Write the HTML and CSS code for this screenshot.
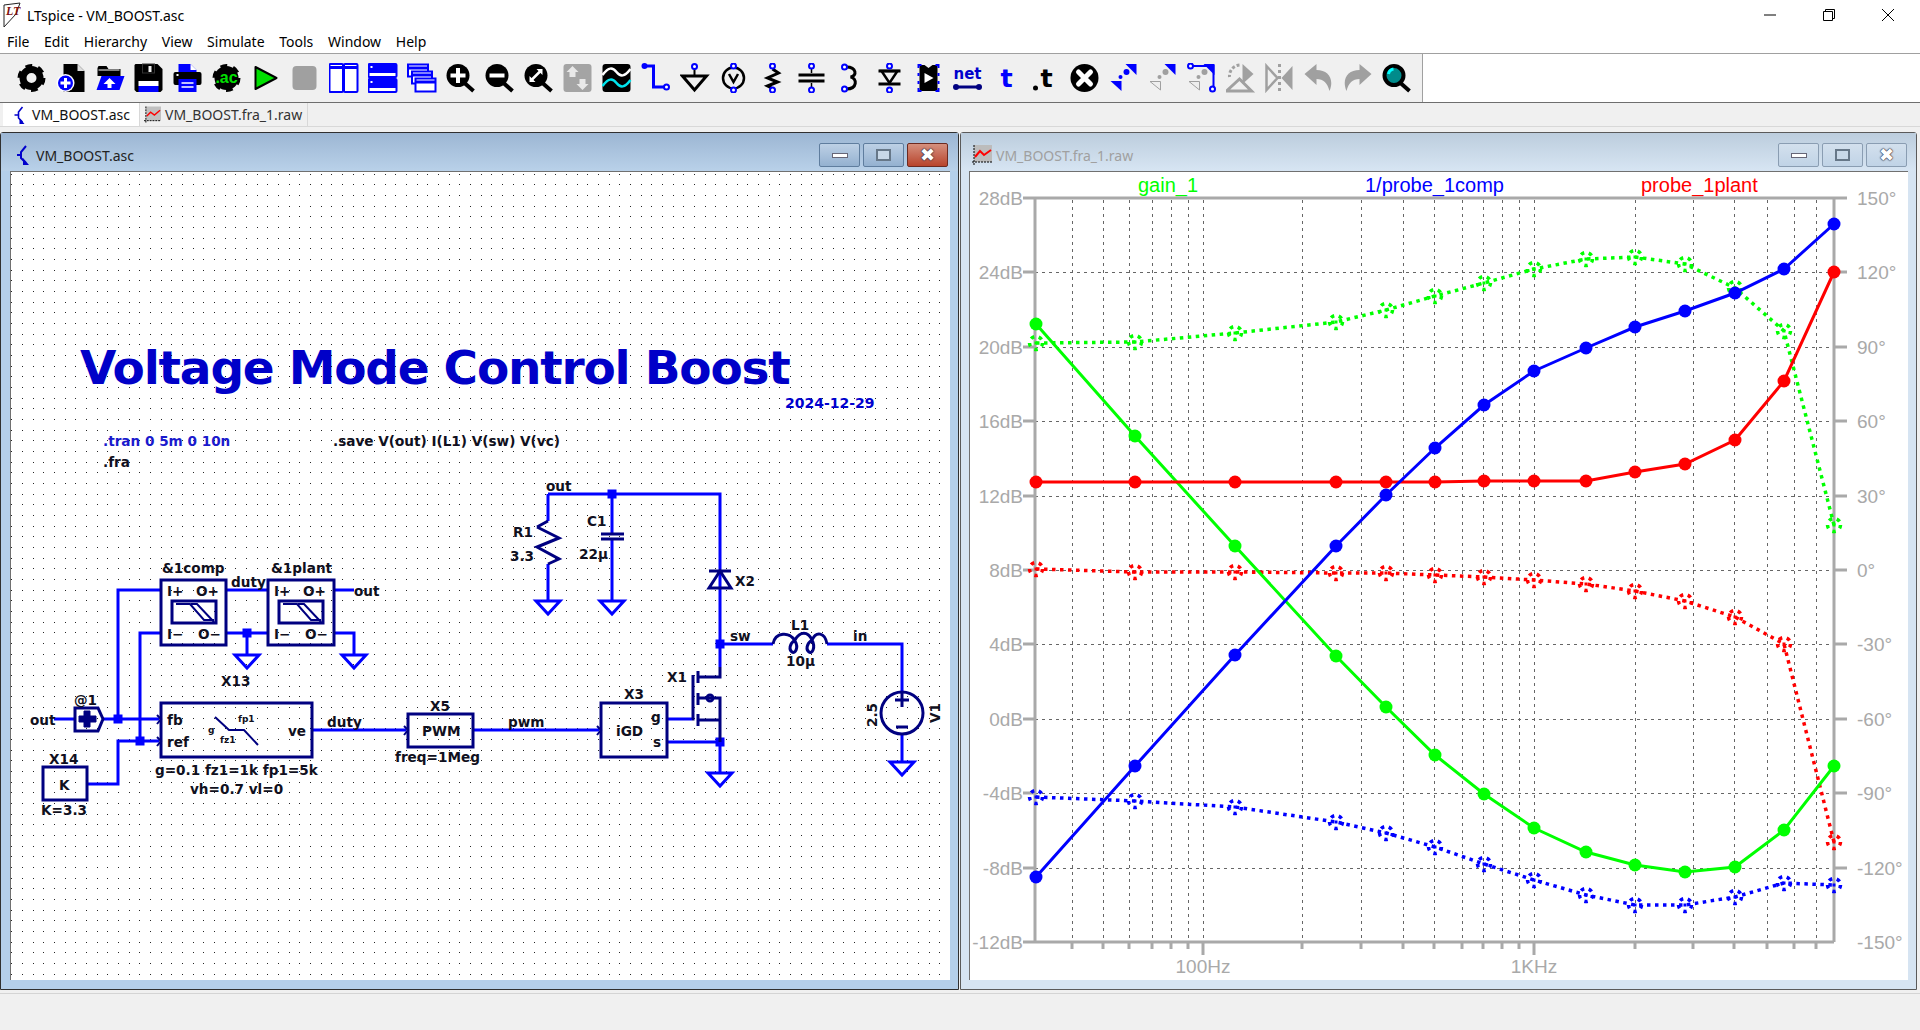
FILE: index.html
```html
<!DOCTYPE html>
<html lang="en">

<head>
    <meta charset="UTF-8">
    <title>LTspice - VM_BOOST.asc</title>
    <link rel="stylesheet" href="styles.css">
</head>

<body>
    <header class="titlebar">
        <svg class="applogo" viewBox="0 0 18 26">
            <path d="M1 3 L17 1 L13 12 L1 25 Z" fill="#fff" stroke="#222" stroke-width="1" />
            <text x="3" y="13" class="applogo-text">LT</text>
        </svg>
        <span class="apptitle">LTspice - VM_BOOST.asc</span>
        <div class="wincontrols">
            <svg viewBox="0 0 14 14">
                <path d="M1 7H13" />
            </svg>
            <svg viewBox="0 0 14 14">
                <path d="M1.5 3.5H10.5V12.5H1.5ZM3.5 3.5V1.5H12.5V10.5H10.5" />
            </svg>
            <svg viewBox="0 0 14 14">
                <path d="M1 1L13 13M13 1L1 13" />
            </svg>
        </div>
    </header>

    <nav class="menubar">
        <span>File</span>
        <span>Edit</span>
        <span>Hierarchy</span>
        <span>View</span>
        <span>Simulate</span>
        <span>Tools</span>
        <span>Window</span>
        <span>Help</span>
    </nav>

    <div class="toolbar">
        <div class="tools">
            <!-- settings -->
            <svg viewBox="0 0 30 30"><circle cx="15" cy="15" r="12" fill="none" stroke="#000" stroke-width="4" stroke-dasharray="6.6 5.97" /><circle cx="15" cy="15" r="8.5" fill="none" stroke="#000" stroke-width="7" /></svg>
            <!-- new -->
            <svg viewBox="0 0 30 30"><path d="M8 1H22L29 8V29H8Z" fill="#000" /><path d="M22 1L29 8H22Z" fill="#ddd" /><circle cx="10" cy="20" r="9" fill="#fff" /><circle cx="10" cy="20" r="7.5" fill="#0000ff" /><path d="M10 15V25M5 20H15" stroke="#fff" stroke-width="3" /></svg>
            <!-- open -->
            <svg viewBox="0 0 30 30"><path d="M3 5L4 3H12L14 6H26V13H3Z" fill="#000" /><path d="M4 7H25" stroke="#fff" /><path d="M7 13H30L25 27H2Z" fill="#0000ff" /><path d="M15 15L21 21H17V25H13V21H9Z" fill="#fff" /></svg>
            <!-- save -->
            <svg viewBox="0 0 30 30"><path d="M2 1H24L29 6V27L27 29H3L1 27V2Z" fill="#000" /><rect x="9" y="1" width="12" height="9" fill="#000" stroke="#333" /><rect x="15" y="3" width="3" height="6" fill="#eee" /><rect x="5" y="18" width="20" height="5" fill="#fff" /><rect x="5" y="23" width="20" height="6" fill="#0000ff" /></svg>
            <!-- print -->
            <svg viewBox="0 0 30 30"><path d="M6 1H18L24 7V11H6Z" fill="#0000ff" /><path d="M18 1L24 7H18Z" fill="#fff" /><rect x="1" y="9" width="28" height="13" rx="2" fill="#000" /><rect x="4" y="11" width="2" height="2" fill="#fff" /><rect x="6" y="16" width="18" height="13" fill="#0000ff" /><path d="M9 20H21M9 24H21" stroke="#fff" stroke-width="1.5" /></svg>
            <!-- ac -->
            <svg viewBox="0 0 30 30"><circle cx="15" cy="15" r="12" fill="none" stroke="#000" stroke-width="4" stroke-dasharray="6.6 5.97" /><circle cx="15" cy="15" r="12" fill="#000" /><text x="15" y="20" class="ico-ac">.ac</text></svg>
            <!-- run -->
            <svg viewBox="0 0 30 30"><path d="M5 4L26 15L5 26Z" fill="#00e000" stroke="#000" stroke-width="2" stroke-linejoin="round" /></svg>
            <!-- halt -->
            <svg viewBox="0 0 30 30"><rect x="3" y="3" width="24" height="24" rx="4" fill="#a0a0a0" /></svg>
            <!-- tile vertical -->
            <svg viewBox="0 0 30 30"><rect x="1" y="1" width="13.5" height="28" rx="1" fill="#fff" stroke="#0000ff" stroke-width="2" /><rect x="15.5" y="1" width="13.5" height="28" rx="1" fill="#fff" stroke="#0000ff" stroke-width="2" /><path d="M1 4.5H14M16 4.5H29" stroke="#0000ff" stroke-width="3" /></svg>
            <!-- tile horizontal -->
            <svg viewBox="0 0 30 30"><rect x="1" y="1" width="28" height="13" rx="1" fill="#fff" stroke="#0000ff" stroke-width="2" /><rect x="1" y="16" width="28" height="13" rx="1" fill="#fff" stroke="#0000ff" stroke-width="2" /><path d="M1 6H29M1 21H29" stroke="#0000ff" stroke-width="8" /><path d="M3 4H5M3 19H5" stroke="#fff" stroke-width="2" /></svg>
            <!-- cascade -->
            <svg viewBox="0 0 30 30"><rect x="1.5" y="1.5" width="20" height="12" fill="#fff" stroke="#0000ff" stroke-width="2" /><rect x="5.5" y="8.5" width="20" height="12" fill="#fff" stroke="#0000ff" stroke-width="2" /><rect x="9" y="15.5" width="20" height="13" fill="#fff" stroke="#0000ff" stroke-width="2" /><path d="M1 5H22M5 12H26M9 19H29" stroke="#0000ff" stroke-width="3" /></svg>
            <!-- zoom in -->
            <svg viewBox="0 0 30 30"><path d="M19 20L28 28" stroke="#000" stroke-width="4" /><circle cx="12.5" cy="12.5" r="11.5" fill="#000" /><path d="M12.5 5V20M5 12.5H20" stroke="#fff" stroke-width="4" /></svg>
            <!-- zoom out -->
            <svg viewBox="0 0 30 30"><path d="M19 20L28 28" stroke="#000" stroke-width="4" /><circle cx="12.5" cy="12.5" r="11.5" fill="#000" /><path d="M5 12.5H20" stroke="#fff" stroke-width="4" /></svg>
            <!-- zoom fit -->
            <svg viewBox="0 0 30 30"><path d="M19 20L28 28" stroke="#000" stroke-width="4" /><circle cx="12.5" cy="12.5" r="11.5" fill="#000" /><path d="M7.5 17.5L17.5 7.5" stroke="#fff" stroke-width="2.5" /><path d="M13 6H19V12ZM6 13V19H12Z" fill="#fff" /></svg>
            <!-- pan -->
            <svg viewBox="0 0 30 30"><rect x="1" y="1" width="28" height="28" rx="3" fill="#a4a4a4" /><path d="M10 3L16 9H13V14H7V9H4Z" fill="#e8e8e8" /><path d="M20 27L14 21H17V16H23V21H26Z" fill="#e8e8e8" /></svg>
            <!-- waves -->
            <svg viewBox="0 0 30 30"><rect x="1" y="1" width="28" height="28" rx="3" fill="#000" /><path d="M1 12C7 4 11 4 15 9S23 14 29 6" fill="none" stroke="#fff" stroke-width="2.5" /><path d="M1 23C7 15 11 15 15 20S23 25 29 17" fill="none" stroke="#00e5ee" stroke-width="2.5" /></svg>
            <!-- wire -->
            <svg viewBox="0 0 30 30"><path d="M4 3H13V24H26" fill="none" stroke="#0000ff" stroke-width="3" /><circle cx="4" cy="3" r="3" fill="#0000ff" /><circle cx="26" cy="24" r="2.5" fill="#fff" stroke="#0000ff" stroke-width="2" /></svg>
            <!-- ground -->
            <svg viewBox="0 0 30 30"><path d="M15 6V13" stroke="#000" stroke-width="2" /><path d="M3 13H27L15 27Z" fill="none" stroke="#000" stroke-width="3" /><circle cx="15" cy="3.5" r="2.5" fill="#fff" stroke="#0000ff" stroke-width="2" /></svg>
            <!-- voltage source -->
            <svg viewBox="0 0 30 30"><circle cx="15" cy="15" r="10.5" fill="none" stroke="#000" stroke-width="2.5" /><path d="M10.5 11L15 19L19.5 11" fill="none" stroke="#000" stroke-width="2.5" /><circle cx="15" cy="3" r="2.5" fill="#fff" stroke="#0000ff" stroke-width="2" /><circle cx="15" cy="27" r="2.5" fill="#fff" stroke="#0000ff" stroke-width="2" /></svg>
            <!-- resistor -->
            <svg viewBox="0 0 30 30"><path d="M15 6L21 10L10 15L20 19L10 23L14 25" fill="none" stroke="#000" stroke-width="3" /><circle cx="15" cy="3" r="2.5" fill="#fff" stroke="#0000ff" stroke-width="2" /><circle cx="15" cy="27" r="2.5" fill="#fff" stroke="#0000ff" stroke-width="2" /></svg>
            <!-- capacitor -->
            <svg viewBox="0 0 30 30"><path d="M2 12H28M2 18H28" stroke="#000" stroke-width="3" /><path d="M15 5V10M15 20V25" stroke="#000" stroke-width="1.5" /><circle cx="15" cy="3" r="2.5" fill="#fff" stroke="#0000ff" stroke-width="2" /><circle cx="15" cy="27" r="2.5" fill="#fff" stroke="#0000ff" stroke-width="2" /></svg>
            <!-- inductor -->
            <svg viewBox="0 0 30 30"><path d="M11 4C21 4 22 13 15 14C22 15 22 26 11 26" fill="none" stroke="#000" stroke-width="3" /><circle cx="9" cy="4" r="2.5" fill="#fff" stroke="#0000ff" stroke-width="2" /><circle cx="9" cy="26" r="2.5" fill="#fff" stroke="#0000ff" stroke-width="2" /></svg>
            <!-- diode -->
            <svg viewBox="0 0 30 30"><path d="M4 8H26M4 21H26" stroke="#000" stroke-width="3" /><path d="M7 8H23L15 20Z" fill="none" stroke="#000" stroke-width="2.5" /><circle cx="15" cy="3" r="2.5" fill="#fff" stroke="#0000ff" stroke-width="2" /><circle cx="15" cy="27" r="2.5" fill="#fff" stroke="#0000ff" stroke-width="2" /></svg>
            <!-- component -->
            <svg viewBox="0 0 30 30"><path d="M6 2H11L15 5L19 2H24V28H6Z" fill="#000" /><path d="M11 10L20 15L11 20Z" fill="#fff" /><path d="M5 5V2H8M22 2H25V5M25 10V13M25 18V21M25 25V28H22M8 28H5V25M5 21V18M5 13V10" fill="none" stroke="#0000ff" stroke-width="2" /></svg>
            <!-- net -->
            <svg viewBox="0 0 30 30"><text x="15" y="16" class="ico-net">net</text><path d="M3 24H27" stroke="#000080" stroke-width="3" /><circle cx="3.5" cy="24" r="3" fill="#000080" /><circle cx="26.5" cy="24" r="3" fill="#000080" /></svg>
            <!-- text -->
            <svg viewBox="0 0 30 30"><text x="15" y="24" class="ico-t ico-blue">t</text></svg>
            <!-- spice directive -->
            <svg viewBox="0 0 30 30"><text x="16" y="24" class="ico-t">t</text><circle cx="5" cy="25" r="2.5" fill="#000" /></svg>
            <!-- delete -->
            <svg viewBox="0 0 30 30"><circle cx="15" cy="15" r="14" fill="#000" /><path d="M9 9L21 21M21 9L9 21" stroke="#fff" stroke-width="5" stroke-linecap="round" /></svg>
            <!-- move -->
            <svg viewBox="0 0 30 30"><path d="M28 1V12L17 1Z" fill="#0000ff" /><path d="M2 18H13V28Z" fill="#0000ff" /><circle cx="18" cy="9" r="3" fill="#0000ff" /><circle cx="12" cy="14" r="2" fill="#0000ff" /></svg>
            <!-- drag -->
            <svg viewBox="0 0 30 30"><path d="M28 1V12L17 1Z" fill="#0000ff" /><path d="M2.5 18.5H13L13 27Z" fill="#eee" stroke="#a0a0a0" /><circle cx="18" cy="9" r="3" fill="#a0a0a0" /><circle cx="12" cy="14" r="2" fill="#a0a0a0" /></svg>
            <!-- drag wire -->
            <svg viewBox="0 0 30 30"><path d="M5 3H27V25" fill="none" stroke="#0000ff" stroke-width="2" /><path d="M28 1V12L17 1Z" fill="#0000ff" /><path d="M2.5 18.5H13L13 27Z" fill="#eee" stroke="#a0a0a0" /><circle cx="18" cy="9" r="3" fill="#a0a0a0" /><circle cx="12" cy="14" r="2" fill="#a0a0a0" /><circle cx="4" cy="3" r="2.5" fill="#fff" stroke="#0000ff" stroke-width="2" /><circle cx="26" cy="26" r="2.5" fill="#fff" stroke="#0000ff" stroke-width="2" /></svg>
            <!-- rotate -->
            <svg viewBox="0 0 30 30"><path d="M17 1L28 11L17 21Z" fill="#a0a0a0" /><path d="M14 2A11 11 0 0 0 4 14" fill="none" stroke="#a0a0a0" stroke-width="3" stroke-dasharray="3 2" /><path d="M14 16L26 28H1Z" fill="none" stroke="#a0a0a0" stroke-width="3" /></svg>
            <!-- mirror -->
            <svg viewBox="0 0 30 30"><path d="M2 3L13 15L2 27Z" fill="none" stroke="#a0a0a0" stroke-width="2.5" /><path d="M28 3L17 15L28 27Z" fill="#a0a0a0" /><path d="M15 1V29" stroke="#a0a0a0" stroke-width="3" stroke-dasharray="3 3" /></svg>
            <!-- undo -->
            <svg viewBox="0 0 30 30"><path d="M1 11L13 1V7C25 7 31 16 26 28C24 20 20 16 13 16V22Z" fill="#a0a0a0" /></svg>
            <!-- redo -->
            <svg viewBox="0 0 30 30"><path d="M29 11L17 1V7C5 7 -1 16 4 28C6 20 10 16 17 16V22Z" fill="#a0a0a0" /></svg>
            <!-- find -->
            <svg viewBox="0 0 30 30"><path d="M19 20L28 28" stroke="#000" stroke-width="4" /><circle cx="12.5" cy="12.5" r="9.5" fill="#008b8b" stroke="#000" stroke-width="4" /><path d="M7 11A6 6 0 0 1 12 6" stroke="#00ffff" stroke-width="3" fill="none" /></svg>
        </div>
    </div>

    <div class="tabstrip">
        <div class="tab tab-active">
            <svg class="tabicon" viewBox="0 0 14 18">
                <path d="M10 1L6 6V12L10 16M2 9H6" fill="none" stroke="#0000cc" stroke-width="1.600" />
                <path d="M7 12L12 18H7Z" fill="#0000cc" />
            </svg>
            <span>VM_BOOST.asc</span>
        </div>
        <div class="tab">
            <svg class="tabicon" viewBox="0 0 18 18">
                <rect x="2" y="0" width="16" height="15" fill="#c0c0c0" />
                <path d="M2 0V18M0 15H18" stroke="#000" stroke-dasharray="2 1" />
                <path d="M3 10L7 6L11 9L17 4" fill="none" stroke="#ff0000" stroke-width="1.5" />
            </svg>
            <span>VM_BOOST.fra_1.raw</span>
        </div>
    </div>

    <main class="desktop">
        <section class="window window-active">
            <div class="window-title">
                <svg class="window-icon" viewBox="0 0 14 20">
                    <path d="M10 1L5 7V13L10 18M1 10H5" fill="none" stroke="#0000cc" stroke-width="2" />
                    <path d="M7 13L13 20H7Z" fill="#0000cc" />
                </svg>
                <span>VM_BOOST.asc</span>
                <div class="window-buttons">
                    <button class="winbtn"><i class="glyph-min"></i></button>
                    <button class="winbtn"><i class="glyph-max"></i></button>
                    <button class="winbtn winbtn-close"><i class="glyph-close">&#10006;</i></button>
                </div>
            </div>
            <div class="window-body">
                <svg class="sheet" viewBox="11 172 939 808">
                    <defs>
                        <pattern id="griddots" patternUnits="userSpaceOnUse" x="22" y="547" width="32" height="32">
                            <rect x="0" y="0" width="1" height="1" />
                            <rect x="11" y="0" width="1" height="1" />
                            <rect x="21" y="0" width="1" height="1" />
                            <rect x="0" y="11" width="1" height="1" />
                            <rect x="11" y="11" width="1" height="1" />
                            <rect x="21" y="11" width="1" height="1" />
                            <rect x="0" y="21" width="1" height="1" />
                            <rect x="11" y="21" width="1" height="1" />
                            <rect x="21" y="21" width="1" height="1" />
                        </pattern>
                        <path id="gnd" d="M-12 0H12L0 13Z" />
                    </defs>
                    <rect class="griddots" x="11" y="172" width="939" height="808" fill="url(#griddots)" />

                    <!-- wires -->
                    <path class="wire" d="M54 719H75M103 719H159M118 719V590H161M140 741V633H161M87 784H118V741H159
                        M226 590H268M226 633H268M247 633V655M334 590H354M334 633H354V655
                        M312 730H406M473 730H599M667 719H692M667 742H720M720 742V773
                        M548 494H720V667M548 494V521M548 564V601M612 494V534M612 539V601
                        M720 644H773M827 644H902V692M902 735V762" />
                    <g class="junctions">
                        <rect x="113.500" y="714.500" width="9" height="9" />
                        <rect x="135.500" y="736.500" width="9" height="9" />
                        <rect x="242.500" y="628.500" width="9" height="9" />
                        <rect x="607.500" y="489.500" width="9" height="9" />
                        <rect x="715.500" y="639.500" width="9" height="9" />
                        <rect x="715.500" y="737.500" width="9" height="9" />
                    </g>
                    <g class="gnds">
                        <use href="#gnd" x="247" y="655" />
                        <use href="#gnd" x="354" y="655" />
                        <use href="#gnd" x="548" y="601" />
                        <use href="#gnd" x="612" y="601" />
                        <use href="#gnd" x="720" y="773" />
                        <use href="#gnd" x="902" y="762" />
                    </g>

                    <!-- symbols -->
                    <g class="sym">
                        <rect x="161" y="580" width="65" height="65" />
                        <rect x="172" y="601" width="44" height="22" />
                        <path class="thin" d="M176 604H190L204 620H214M191 604H197L214 622" />
                        <rect x="268" y="580" width="66" height="65" />
                        <rect x="279" y="601" width="44" height="22" />
                        <path class="thin" d="M283 604H297L311 620H321M298 604H304L321 622" />

                        <rect x="161" y="703" width="151" height="54" />
                        <path class="thin" d="M215 717L229 730H244L258 745" />
                        <path class="thin" d="M157 715L161 719L157 724M157 737L161 741L157 746M404 726L408 730L404 735M597 726L601 730L597 735" />

                        <rect x="43" y="767" width="44" height="33" />
                        <rect x="408" y="714" width="65" height="33" />
                        <rect x="601" y="703" width="66" height="54" />

                        <path d="M75 708H98L103 719L98 731H75Z" />
                        <path class="solid" d="M79 716H84V711H90V716H96V722H90V727H84V722H79Z" />

                        <path d="M537 527L559 538L537 547L559 559L548 564M548 521L537 527" />
                        <path d="M601 534H624M601 539H624" />
                        <path d="M709 571H731M720 571L709 588H731Z" />
                        <path d="M773 644C775 632 790 631 795 641C799 648 795 654 792 652C789 650 789 644 795 640C800 631 808 631 812 640C816 648 812 654 809 652C806 650 806 644 812 640C816 631 825 632 827 644" />
                        <path d="M693 675V719H692M698 671V683M698 693V705M698 714V726M698 677H720V667M698 698H720V742M698 720H720" />
                        <circle cx="710" cy="698" r="3" />
                        <circle cx="902" cy="713" r="21" />
                        <path d="M902 693V707M895 700H909M896 727H908" />
                    </g>

                    <!-- labels -->
                    <text class="title" x="80" y="384">Voltage Mode Control Boost</text>
                    <text class="lbl date" x="785" y="408">2024-12-29</text>
                    <text class="lbl directive" x="103" y="446">.tran 0 5m 0 10n</text>
                    <text class="lbl" x="103" y="467">.fra</text>
                    <text class="lbl" x="333" y="446">.save V(out) I(L1) V(sw) V(vc)</text>

                    <text class="lbl" x="162" y="573">&amp;1comp</text>
                    <text class="lbl" x="271" y="573">&amp;1plant</text>
                    <text class="lbl" x="231" y="587">duty</text>
                    <text class="lbl" x="354" y="596">out</text>
                    <text class="lbl" x="221" y="686">X13</text>
                    <text class="lbl" x="167" y="596">I+</text>
                    <text class="lbl" x="196" y="596">O+</text>
                    <text class="lbl" x="167" y="639">I&#8722;</text>
                    <text class="lbl" x="198" y="639">O&#8722;</text>
                    <text class="lbl" x="274" y="596">I+</text>
                    <text class="lbl" x="303" y="596">O+</text>
                    <text class="lbl" x="274" y="639">I&#8722;</text>
                    <text class="lbl" x="305" y="639">O&#8722;</text>

                    <text class="lbl" x="74" y="705">@1</text>
                    <text class="lbl" x="30" y="725">out</text>
                    <text class="lbl" x="49" y="764">X14</text>
                    <text class="lbl" x="59" y="790">K</text>
                    <text class="lbl" x="41" y="815">K=3.3</text>
                    <text class="lbl" x="155" y="775">g=0.1 fz1=1k fp1=5k</text>
                    <text class="lbl" x="190" y="794">vh=0.7 vl=0</text>
                    <text class="lbl" x="167" y="725">fb</text>
                    <text class="lbl" x="167" y="747">ref</text>
                    <text class="lbl" x="288" y="736">ve</text>
                    <text class="lbl lbl-small" x="238" y="722">fp1</text>
                    <text class="lbl lbl-small" x="220" y="743">fz1</text>
                    <text class="lbl lbl-small" x="208" y="733">g</text>
                    <text class="lbl" x="327" y="727">duty</text>
                    <text class="lbl" x="430" y="711">X5</text>
                    <text class="lbl" x="422" y="736">PWM</text>
                    <text class="lbl" x="395" y="762">freq=1Meg</text>

                    <text class="lbl" x="546" y="491">out</text>
                    <text class="lbl" x="513" y="537">R1</text>
                    <text class="lbl" x="510" y="561">3.3</text>
                    <text class="lbl" x="587" y="526">C1</text>
                    <text class="lbl" x="579" y="559">22&#181;</text>
                    <text class="lbl" x="735" y="586">X2</text>
                    <text class="lbl" x="730" y="641">sw</text>
                    <text class="lbl" x="791" y="630">L1</text>
                    <text class="lbl" x="786" y="666">10&#181;</text>
                    <text class="lbl" x="853" y="641">in</text>
                    <text class="lbl" x="667" y="682">X1</text>
                    <text class="lbl" x="624" y="699">X3</text>
                    <text class="lbl" x="508" y="727">pwm</text>
                    <text class="lbl" x="616" y="736">iGD</text>
                    <text class="lbl" x="651" y="722">g</text>
                    <text class="lbl" x="653" y="747">s</text>
                    <text class="lbl" transform="translate(877 727) rotate(-90)">2.5</text>
                    <text class="lbl" transform="translate(940 723) rotate(-90)">V1</text>
                </svg>
            </div>
        </section>

        <section class="window window-inactive">
            <div class="window-title">
                <svg class="window-icon window-icon-plot" viewBox="0 0 20 20">
                    <rect x="2" y="0" width="18" height="17" fill="#bcbcbc" />
                    <path d="M2 0V20M0 17H20" stroke="#000" stroke-dasharray="2 1" />
                    <path d="M3 12L8 6L12 10L19 5" fill="none" stroke="#ff0000" stroke-width="2" />
                </svg>
                <span>VM_BOOST.fra_1.raw</span>
                <div class="window-buttons">
                    <button class="winbtn"><i class="glyph-min"></i></button>
                    <button class="winbtn"><i class="glyph-max"></i></button>
                    <button class="winbtn winbtn-close"><i class="glyph-close">&#10006;</i></button>
                </div>
            </div>
            <div class="window-body">
                <svg class="plot" viewBox="970 172 938 808">
                    <defs>
                        <marker id="dot-g" markerUnits="userSpaceOnUse" markerWidth="16" markerHeight="16" refX="8" refY="8"><circle cx="8" cy="8" r="6.500" fill="#00ff00" /></marker>
                        <marker id="dot-b" markerUnits="userSpaceOnUse" markerWidth="16" markerHeight="16" refX="8" refY="8"><circle cx="8" cy="8" r="6.500" fill="#0000ff" /></marker>
                        <marker id="dot-r" markerUnits="userSpaceOnUse" markerWidth="16" markerHeight="16" refX="8" refY="8"><circle cx="8" cy="8" r="6.500" fill="#ff0000" /></marker>
                        <marker id="ring-g" markerUnits="userSpaceOnUse" markerWidth="22" markerHeight="22" refX="11" refY="11"><circle cx="11" cy="11" r="6.500" fill="none" stroke="#00ff00" stroke-width="3.500" stroke-dasharray="3.500 4.670" /><rect x="9.500" y="9.500" width="3" height="3" fill="#00ff00" /></marker>
                        <marker id="ring-b" markerUnits="userSpaceOnUse" markerWidth="22" markerHeight="22" refX="11" refY="11"><circle cx="11" cy="11" r="6.500" fill="none" stroke="#0000ff" stroke-width="3.500" stroke-dasharray="3.500 4.670" /><rect x="9.500" y="9.500" width="3" height="3" fill="#0000ff" /></marker>
                        <marker id="ring-r" markerUnits="userSpaceOnUse" markerWidth="22" markerHeight="22" refX="11" refY="11"><circle cx="11" cy="11" r="6.500" fill="none" stroke="#ff0000" stroke-width="3.500" stroke-dasharray="3.500 4.670" /><rect x="9.500" y="9.500" width="3" height="3" fill="#ff0000" /></marker>
                    </defs>

                    <text class="legend legend-g" x="1138" y="192">gain_1</text>
                    <text class="legend legend-b" x="1365" y="192">1/probe_1comp</text>
                    <text class="legend legend-r" x="1641" y="192">probe_1plant</text>

                    <path class="grid" d="M1035 272.500H1834M1035 347.500H1834M1035 421.500H1834M1035 496.500H1834M1035 570.500H1834M1035 644.500H1834M1035 719.500H1834M1035 793.500H1834M1035 868.500H1834" />
                    <path class="grid" d="M1072.500 200V942M1103.500 200V942M1129.500 200V942M1152.500 200V942M1171.500 200V942M1188.500 200V942M1203.500 200V942M1302.500 200V942M1361.500 200V942M1403.500 200V942M1434.500 200V942M1462.500 200V942M1483.500 200V942M1502.500 200V942M1519.500 200V942M1534.500 200V942M1635.500 200V942M1693.500 200V942M1734.500 200V942M1767.500 200V942M1794.500 200V942M1816.500 200V942" />

                    <path class="axis" d="M1023 198H1847M1023 942H1834M1035 198V942M1834 198V942
                        M1023 272H1035M1023 347H1035M1023 421H1035M1023 496H1035M1023 570H1035M1023 644H1035M1023 719H1035M1023 793H1035M1023 868H1035
                        M1834 272H1847M1834 347H1847M1834 421H1847M1834 496H1847M1834 570H1847M1834 644H1847M1834 719H1847M1834 793H1847M1834 868H1847
                        M1072 942V949M1103 942V949M1129 942V949M1152 942V949M1171 942V949M1188 942V949M1203 942V955M1302 942V949M1361 942V949M1403 942V949M1434 942V949M1462 942V949M1483 942V949M1502 942V949M1519 942V949M1534 942V955M1635 942V949M1693 942V949M1734 942V949M1767 942V949M1794 942V949M1816 942V949" />

                    <g class="ticks ticks-left">
                        <text x="1023" y="205">28dB</text>
                        <text x="1023" y="279">24dB</text>
                        <text x="1023" y="354">20dB</text>
                        <text x="1023" y="428">16dB</text>
                        <text x="1023" y="503">12dB</text>
                        <text x="1023" y="577">8dB</text>
                        <text x="1023" y="651">4dB</text>
                        <text x="1023" y="726">0dB</text>
                        <text x="1023" y="800">-4dB</text>
                        <text x="1023" y="875">-8dB</text>
                        <text x="1023" y="949">-12dB</text>
                    </g>
                    <g class="ticks ticks-right">
                        <text x="1857" y="205">150&#176;</text>
                        <text x="1857" y="279">120&#176;</text>
                        <text x="1857" y="354">90&#176;</text>
                        <text x="1857" y="428">60&#176;</text>
                        <text x="1857" y="503">30&#176;</text>
                        <text x="1857" y="577">0&#176;</text>
                        <text x="1857" y="651">-30&#176;</text>
                        <text x="1857" y="726">-60&#176;</text>
                        <text x="1857" y="800">-90&#176;</text>
                        <text x="1857" y="875">-120&#176;</text>
                        <text x="1857" y="949">-150&#176;</text>
                    </g>
                    <g class="ticks ticks-x">
                        <text x="1203" y="973">100Hz</text>
                        <text x="1534" y="973">1KHz</text>
                    </g>

                    <!-- phase -->
                    <polyline class="phase phase-g" points="1036,343 1135,342 1235,333 1336,322 1386,310 1435,296 1484,283 1534,269 1586,259 1635,257 1685,264 1735,288 1784,331 1834,525" />
                    <polyline class="phase phase-r" points="1036,569 1135,572 1235,572 1336,573 1386,573 1435,575 1484,577 1534,580 1586,584 1635,591 1685,601 1735,617 1784,644 1834,842" />
                    <polyline class="phase phase-b" points="1036,797 1135,801 1235,807 1336,822 1386,833 1435,847 1484,864 1534,880 1586,895 1635,905 1685,905 1735,897 1784,883 1834,885" />
                    <!-- gain -->
                    <polyline class="gain gain-g" points="1036,324 1135,436 1235,546 1336,656 1386,707 1435,755 1484,794 1534,828 1586,852 1635,865 1685,872 1735,867 1784,830 1834,766" />
                    <polyline class="gain gain-r" points="1036,482 1135,482 1235,482 1336,482 1386,482 1435,482 1484,481 1534,481 1586,481 1635,472 1685,464 1735,440 1784,381 1834,272" />
                    <polyline class="gain gain-b" points="1036,877 1135,766 1235,655 1336,546 1386,495 1435,448 1484,405 1534,371 1586,348 1635,327 1685,311 1735,293 1784,269 1834,224" />
                </svg>
            </div>
        </section>
    </main>

    <footer class="statusbar"></footer>
</body>

</html>
```

FILE: styles.css
```css
html,
body {
    margin: 0;
    height: 100%;
}

body {
    display: flex;
    flex-direction: column;
    height: 1030px;
    overflow: hidden;
    background-color: #f0f0f0;
    font-family: "Noto Sans", sans-serif;
    color: #000;
}

/* title and menu */

.titlebar {
    display: flex;
    align-items: center;
    height: 30px;
    background-color: #fff;
    font-size: 14px;
}

.applogo {
    width: 18px;
    height: 26px;
    margin-left: 3px;
}

.applogo-text {
    font-family: "Liberation Serif", serif;
    font-size: 12px;
    font-weight: bold;
    font-style: italic;
    fill: #801010;
}

.apptitle {
    margin-left: 6px;
}

.wincontrols {
    display: flex;
    gap: 45px;
    margin-left: auto;
    margin-right: 25px;
}

.wincontrols svg {
    width: 14px;
    height: 14px;
    fill: none;
    stroke: #000;
}

.menubar {
    display: flex;
    gap: 14.700px;
    align-items: center;
    height: 23px;
    padding-left: 7px;
    background-color: #fff;
    border-bottom: 1px solid #a0a0a0;
    font-size: 14px;
}

/* toolbar */

.toolbar {
    height: 48px;
    background-color: #fff;
    border-bottom: 1px solid #6e6e6e;
}

.tools {
    display: flex;
    align-items: center;
    width: 1423px;
    height: 48px;
    box-sizing: border-box;
    padding-left: 12px;
    background-color: #f0f0f0;
    border-right: 1px solid #a0a0a0;
}

.tools svg {
    flex: none;
    width: 30px;
    height: 30px;
    padding: 0 4.500px;
}

.ico-ac {
    font-family: "Liberation Sans", sans-serif;
    font-size: 16px;
    font-weight: bold;
    text-anchor: middle;
    fill: #00e000;
}

.ico-net {
    font-family: "DejaVu Sans", sans-serif;
    font-size: 15px;
    font-weight: bold;
    text-anchor: middle;
    fill: #0000cc;
}

.ico-t {
    font-family: "DejaVu Sans", sans-serif;
    font-size: 25.500px;
    font-weight: bold;
    text-anchor: middle;
    fill: #000;
}

.ico-blue {
    fill: #0000ff;
}

/* tabs */

.tabstrip {
    display: flex;
    height: 23px;
    padding-left: 3px;
    border-bottom: 1px solid #d8d8d8;
    font-size: 14px;
}

.tab {
    display: flex;
    align-items: center;
    gap: 4px;
    padding: 0 5px 0 4px;
    border-right: 1px solid #d8d8d8;
    color: #333;
}

.tab-active {
    width: 137px;
    box-sizing: border-box;
    padding-left: 8px;
    background-color: #fff;
    color: #111;
}

.tabicon {
    flex: none;
    width: 17px;
    height: 18px;
}

/* mdi windows */

.desktop {
    display: flex;
    gap: 1px;
    height: 858px;
    margin-top: 5px;
}

.window {
    display: flex;
    flex-direction: column;
    flex: none;
    box-sizing: border-box;
    border: 1px solid #303030;
    border-radius: 3px 3px 0 0;
}

.window-active {
    width: 959px;
    background-color: #b4cfea;
}

.window-inactive {
    width: 957px;
    background-color: #d6e4f2;
    border-color: #5a5a5a;
}

.window-title {
    display: flex;
    align-items: center;
    flex: none;
    box-sizing: border-box;
    height: 38px;
    padding: 6px 10px 0 10px;
    background: linear-gradient(#9cb6d3, #b9d1e9);
    color: #222;
    font-size: 14px;
}

.window-inactive .window-title {
    padding-right: 9px;
    background: linear-gradient(#bccddd, #d7e5f3);
    color: #a0a0a0;
}

.window-icon {
    width: 14px;
    height: 20px;
    margin: 0 6px 0 5px;
}

.window-icon-plot {
    width: 20px;
    margin: 0 4px 0 1px;
}

.window-buttons {
    display: flex;
    gap: 3px;
    margin-left: auto;
}

.winbtn {
    display: flex;
    align-items: center;
    justify-content: center;
    width: 41px;
    height: 24px;
    padding: 0;
    background: linear-gradient(#bdd0e5, #94b1d0);
    border: 1px solid #5f7d9e;
    border-radius: 2px;
}

.window-active .winbtn-close {
    background: linear-gradient(#d5907e, #b8442c);
    border-color: #6c2a20;
}

.window-inactive .winbtn {
    background: linear-gradient(#d3e0ed, #c0d3e6);
    border-color: #8a9db2;
}

.glyph-min {
    width: 16px;
    height: 5px;
    background-color: #fff;
    border: 1px solid #667;
    box-sizing: border-box;
}

.glyph-max {
    width: 15px;
    height: 12px;
    box-sizing: border-box;
    border: 2px solid #667788;
    background-color: #c8d8e8;
}

.glyph-close {
    font-style: normal;
    font-size: 18px;
    line-height: 1;
    color: #fff;
    text-shadow: 0 0 1px #334, 0 0 1px #334, 0 0 2px #334;
}

.window-body {
    flex: 1;
    min-height: 0;
    box-sizing: border-box;
    margin: 0 8px 9px 9px;
    background-color: #fff;
    border-top: 1px solid #707070;
    border-left: 1px solid #707070;
}

.window-inactive .window-body {
    margin-left: 8px;
}

.window-body svg {
    display: block;
}

/* schematic */

.sheet {
    width: 939px;
    height: 808px;
}

.griddots {
    opacity: 0.85;
}

.wire {
    fill: none;
    stroke: #0000ff;
    stroke-width: 3;
}

.junctions {
    fill: #0000ff;
}

.gnds {
    fill-opacity: 0;
    stroke: #0000ff;
    stroke-width: 3;
}

.sym {
    fill: none;
    stroke: #000080;
    stroke-width: 3;
}

.sym .thin {
    stroke-width: 2;
}

.sym .solid {
    fill: #000080;
    stroke-width: 1;
}

.lbl {
    font-family: "DejaVu Sans", sans-serif;
    font-size: 13.600px;
    font-weight: bold;
    fill: #101020;
}

.lbl-small {
    font-size: 9px;
}

.title {
    font-family: "DejaVu Sans", sans-serif;
    font-size: 47px;
    font-weight: bold;
    letter-spacing: -1.200px;
    fill: #0000c8;
}

.date {
    font-size: 14px;
    fill: #0000cd;
}

.directive {
    fill: #1a1acd;
}

/* plot */

.plot {
    width: 938px;
    height: 808px;
    font-family: "Liberation Sans", sans-serif;
}

.legend {
    font-size: 20px;
}

.legend-g {
    fill: #00ff00;
}

.legend-b {
    fill: #0000ff;
}

.legend-r {
    fill: #ff0000;
}

.grid {
    fill: none;
    stroke: #666;
    stroke-dasharray: 3 4;
    shape-rendering: crispEdges;
}

.axis {
    fill: none;
    stroke: #a9a9a9;
    stroke-width: 3;
}

.ticks {
    font-size: 19px;
    fill: #a9a9a9;
}

.ticks-left {
    text-anchor: end;
}

.ticks-x {
    text-anchor: middle;
}

.gain,
.phase {
    fill: none;
}

.gain {
    stroke-width: 3;
}

.phase {
    stroke-width: 3.500;
    stroke-dasharray: 3.500 4.500;
}

.gain-g {
    stroke: #00ff00;
    marker: url(#dot-g);
}

.gain-b {
    stroke: #0000ff;
    marker: url(#dot-b);
}

.gain-r {
    stroke: #ff0000;
    marker: url(#dot-r);
}

.phase-g {
    stroke: #00ff00;
    marker: url(#ring-g);
}

.phase-b {
    stroke: #0000ff;
    marker: url(#ring-b);
}

.phase-r {
    stroke: #ff0000;
    marker: url(#ring-r);
}

.statusbar {
    flex: 1;
    margin-top: 3px;
    border-top: 1px solid #d4d4d4;
}
```
